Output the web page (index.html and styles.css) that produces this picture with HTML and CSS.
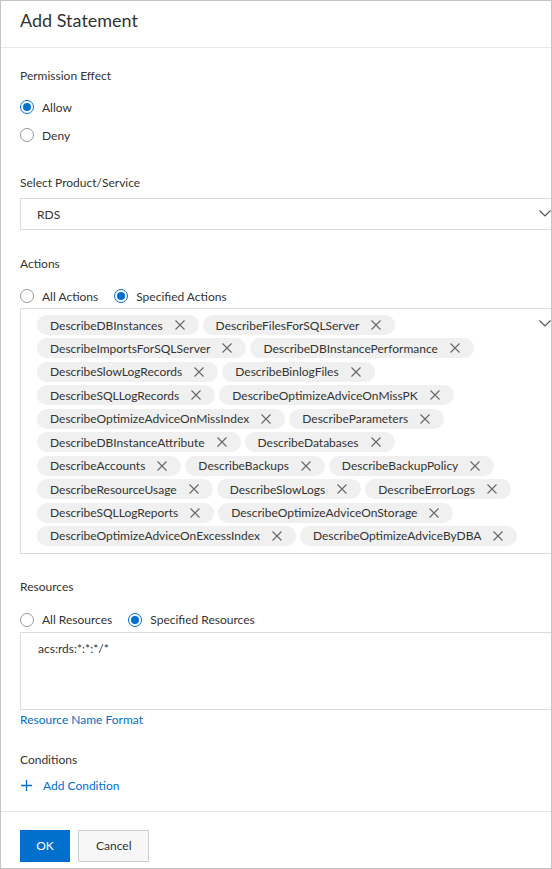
FILE: index.html
```html
<!DOCTYPE html>
<html lang="en">
<head>
    <meta charset="UTF-8">
    <title>Add Statement</title>
    <link rel="stylesheet" href="styles.css">
</head>
<body>

    <div class="dialog">
        <!-- header -->
        <div class="dialog-header">
            <h1 class="dialog-title">Add Statement</h1>
        </div>

        <!-- form -->
        <div class="dialog-body">
            <div class="field field-effect">
                <div class="field-label">Permission Effect</div>
                <label class="radio-row">
                    <span class="radio checked"></span><span>Allow</span>
                </label>
                <label class="radio-row">
                    <span class="radio"></span><span>Deny</span>
                </label>
            </div>

            <div class="field field-product">
                <div class="field-label">Select Product/Service</div>
                <div class="select-box">
                    <span>RDS</span>
                    <svg class="chevron" width="12" height="7" viewBox="0 0 12 7"><path d="M0.5 0.5 L6 6 L11.5 0.5" fill="none" stroke="#555" stroke-width="1.2"/></svg>
                </div>
            </div>

            <div class="field field-actions">
                <div class="field-label">Actions</div>
                <div class="radio-group">
                    <label class="radio-inline"><span class="radio"></span><span>All Actions</span></label>
                    <label class="radio-inline"><span class="radio checked"></span><span>Specified Actions</span></label>
                </div>
                <div class="tag-box">
                    <!-- tags are filled in below -->
                    <svg class="chevron" width="12" height="7" viewBox="0 0 12 7"><path d="M0.5 0.5 L6 6 L11.5 0.5" fill="none" stroke="#555" stroke-width="1.2"/></svg>
                </div>
            </div>

            <div class="field field-resources">
                <div class="field-label">Resources</div>
                <div class="radio-group">
                    <label class="radio-inline"><span class="radio"></span><span>All Resources</span></label>
                    <label class="radio-inline"><span class="radio checked"></span><span>Specified Resources</span></label>
                </div>
                <div class="text-area">acs:rds:*:*:*/*</div>
                <a class="link format-link" href="#">Resource Name Format</a>
            </div>

            <div class="field field-conditions">
                <div class="field-label">Conditions</div>
                <a class="link add-link" href="#">
                    <svg width="11" height="11" viewBox="0 0 11 11"><path d="M5.5 0 V11 M0 5.5 H11" stroke="#0070cc" stroke-width="1.3"/></svg>
                    <span>Add Condition</span>
                </a>
            </div>
        </div>

        <!-- footer -->
        <div class="dialog-footer">
            <button class="btn btn-primary">OK</button>
            <button class="btn">Cancel</button>
        </div>
    </div>

    <script>
        const actions = [
            'DescribeDBInstances', 'DescribeFilesForSQLServer',
            'DescribeImportsForSQLServer', 'DescribeDBInstancePerformance',
            'DescribeSlowLogRecords', 'DescribeBinlogFiles',
            'DescribeSQLLogRecords', 'DescribeOptimizeAdviceOnMissPK',
            'DescribeOptimizeAdviceOnMissIndex', 'DescribeParameters',
            'DescribeDBInstanceAttribute', 'DescribeDatabases',
            'DescribeAccounts', 'DescribeBackups', 'DescribeBackupPolicy',
            'DescribeResourceUsage', 'DescribeSlowLogs', 'DescribeErrorLogs',
            'DescribeSQLLogReports', 'DescribeOptimizeAdviceOnStorage',
            'DescribeOptimizeAdviceOnExcessIndex', 'DescribeOptimizeAdviceByDBA'
        ];

        const tagBox = document.querySelector('.tag-box');
        actions.forEach(name => {
            const tag = document.createElement('span');
            tag.className = 'tag';
            tag.innerHTML = `<span>${name}</span>` +
                '<svg class="tag-close" width="10" height="10" viewBox="0 0 10 10"><path d="M0.5 0.5 L9.5 9.5 M9.5 0.5 L0.5 9.5" stroke="#666" stroke-width="1.1"/></svg>';
            tagBox.appendChild(tag);
        });
    </script>
</body>
</html>
```

FILE: styles.css
```css
/* base */
body {
    margin: 0;
    font-family: 'Lato', 'Open Sans', sans-serif;
    font-size: 12px;
    color: #333;
    background: #fff;
}

.dialog {
    width: 552px;
    height: 869px;
    box-sizing: border-box;
    border: 1px solid #c4c4c4;
    overflow: hidden;
    background: #fff;
}

/* header */
.dialog-header {
    height: 47px;
    border-bottom: 1px solid #e8e8e8;
    padding: 7px 19px 0;
    box-sizing: border-box;
}
.dialog-title {
    margin: 0;
    font-size: 18px;
    font-weight: normal;
    line-height: 24px;
    color: #333;
}

/* body */
.dialog-body {
    padding: 19px 19px 16px;
    border-bottom: 1px solid #e8e8e8;
}

.field-label {
    line-height: 18px;
}

.field-effect .field-label { margin-bottom: 8px; }
.field-product { margin-top: 25px; }
.field-product .field-label { margin-bottom: 6px; }
.field-actions { margin-top: 25px; }
.field-actions .field-label { margin-bottom: 11px; }
.field-resources { margin-top: 24px; }
.field-resources .field-label { margin-bottom: 12px; }
.field-conditions { margin-top: 22px; }

/* radios */
.radio-row {
    display: flex;
    align-items: center;
    height: 28px;
}
.radio-group {
    display: flex;
    align-items: center;
    height: 24px;
    gap: 16px;
}
.radio-inline {
    display: flex;
    align-items: center;
}
.radio {
    width: 14px;
    height: 14px;
    box-sizing: border-box;
    border: 1px solid #999;
    border-radius: 50%;
    margin-right: 8px;
    position: relative;
    background: #fff;
}
.radio.checked {
    border-color: #0070cc;
}
.radio.checked::after {
    content: '';
    position: absolute;
    left: 2px;
    top: 2px;
    width: 8px;
    height: 8px;
    border-radius: 50%;
    background: #0070cc;
}

/* select */
.select-box {
    position: relative;
    width: 537px;
    height: 32px;
    box-sizing: border-box;
    border: 1px solid #dcdcdc;
    padding-left: 16px;
    display: flex;
    align-items: center;
}
.chevron {
    position: absolute;
    right: 5px;
    top: 11px;
}

/* action tags */
.tag-box {
    position: relative;
    width: 537px;
    box-sizing: border-box;
    border: 1px solid #dcdcdc;
    padding: 6px 31px 7px 16px;
    display: flex;
    flex-wrap: wrap;
    column-gap: 4px;
    row-gap: 3.44px;
}
.tag-box .chevron { top: 11px; }

.tag {
    display: inline-flex;
    align-items: center;
    height: 20px;
    padding: 0 14px 0 13px;
    border-radius: 10px;
    background: #f0f0f0;
    white-space: nowrap;
}
.tag-close {
    margin-left: 12px;
}

/* resources */
.text-area {
    width: 537px;
    height: 78px;
    box-sizing: border-box;
    border: 1px solid #dcdcdc;
    padding: 7px 17px;
    line-height: 18px;
}

.link {
    display: block;
    color: #0070cc;
    text-decoration: none;
    line-height: 18px;
}
.format-link {
    margin-top: 1px;
}

.add-link {
    display: flex;
    align-items: center;
    margin-top: 8px;
}
.add-link svg {
    margin: 0 11px 0 1px;
}

/* footer */
.dialog-footer {
    padding: 18px 19px 0;
    display: flex;
    gap: 8px;
}
.btn {
    height: 32px;
    padding: 0 17px;
    font-family: inherit;
    font-size: 12px;
    color: #333;
    background: #f7f7f7;
    border: 1px solid #d0d0d0;
    cursor: pointer;
}
.btn-primary {
    width: 50px;
    padding: 0;
    color: #fff;
    background: #0070cc;
    border-color: #0070cc;
}
```
